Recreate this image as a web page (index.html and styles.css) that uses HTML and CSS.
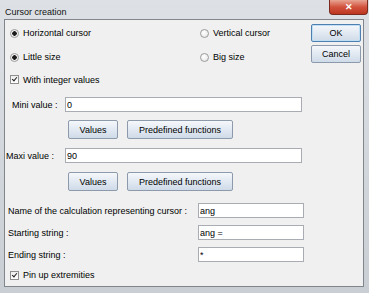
FILE: index.html
```html
<!DOCTYPE html>
<html>
<head>
    <title>Cursor creation</title>
    <link rel="stylesheet" href="styles.css">
</head>
<body>
    <div class="window">
        <div class="titlebar">
            <span class="title">Cursor creation</span>
            <span class="close">&#x2715;</span>
        </div>
        <div class="client">
            <div class="top">
                <div class="options">
                    <label class="opt"><span class="radio on"></span>Horizontal cursor</label>
                    <label class="opt"><span class="radio"></span>Vertical cursor</label>
                    <label class="opt"><span class="radio on"></span>Little size</label>
                    <label class="opt"><span class="radio"></span>Big size</label>
                </div>
                <div class="actions">
                    <button type="button" class="btn default">OK</button>
                    <button type="button" class="btn">Cancel</button>
                </div>
            </div>
            <label class="check-row"><span class="check"></span>With integer values</label>

            <div class="value-row">
                <label class="value-label mini" for="mini">Mini value :</label>
                <input type="text" class="field wide" id="mini" value="0">
            </div>
            <div class="btn-row">
                <button type="button" class="btn values">Values</button>
                <button type="button" class="btn predef">Predefined functions</button>
            </div>

            <div class="value-row second">
                <label class="value-label maxi" for="maxi">Maxi value :</label>
                <input type="text" class="field wide" id="maxi" value="90">
            </div>
            <div class="btn-row second">
                <button type="button" class="btn values">Values</button>
                <button type="button" class="btn predef">Predefined functions</button>
            </div>

            <div class="strings">
                <div class="string-row">
                    <label for="calc">Name of the calculation representing cursor :</label>
                    <input type="text" class="field short" id="calc" value="ang">
                </div>
                <div class="string-row">
                    <label for="start">Starting string :</label>
                    <input type="text" class="field short" id="start" value="ang =">
                </div>
                <div class="string-row">
                    <label for="end">Ending string :</label>
                    <input type="text" class="field short" id="end" value="*">
                </div>
            </div>
            <label class="check-row pin"><span class="check"></span>Pin up extremities</label>
        </div>
    </div>
</body>
</html>
```

FILE: styles.css
```css
body {
    margin: 0;
    font-family: "Liberation Sans", Arial, sans-serif;
    font-size: 9px;
    color: #000;
}
.window {
    width: 369px;
    height: 293px;
    box-sizing: border-box;
    padding: 0 5px 6px 4px;
    background: linear-gradient(#dde1e6, #c9ced4);
    display: flex;
    flex-direction: column;
}
.titlebar {
    height: 20px;
    display: flex;
    justify-content: space-between;
}
.title {
    padding: 7px 0 0 1px;
    color: #111;
}
.close {
    width: 39px;
    height: 15px;
    margin-right: -4px;
    box-sizing: border-box;
    border: 1px solid #7b2a1e;
    border-top: none;
    border-radius: 0 0 4px 4px;
    background: linear-gradient(#e9a594, #d2533d 50%, #bd3620);
    color: #fff;
    font-size: 9px;
    font-weight: bold;
    line-height: 14px;
    text-align: center;
}
.client {
    flex: 1;
    background: #f0f0f0;
    border: 1px solid #80868c;
}
.top {
    display: flex;
}
.options {
    flex: 1;
    display: grid;
    grid-template-columns: 190px 1fr;
    grid-auto-rows: 24px;
    padding: 1px 0 0 5px;
}
.opt, .check-row {
    display: flex;
    align-items: center;
}
.radio {
    width: 7px;
    height: 7px;
    margin-right: 4px;
    border: 1px solid #9a9a9a;
    border-radius: 50%;
    background: radial-gradient(circle at 40% 35%, #ffffff, #e3e3e3);
}
.radio.on {
    background: radial-gradient(circle, #1c1c1c 0 2px, #f4f4f4 2.5px);
}
.actions {
    display: flex;
    flex-direction: column;
    gap: 3px;
    padding-top: 4px;
    margin-right: 2px;
}
.btn {
    height: 19px;
    padding: 0;
    font-family: "Liberation Sans", Arial, sans-serif;
    font-size: 9px;
    color: #000;
    border: 1px solid #8d9aab;
    border-radius: 2px;
    background: linear-gradient(#f5f8fb, #e2e9f2 50%, #cfdbe8);
}
.actions .btn {
    width: 50px;
    height: 18px;
}
.btn.default {
    border-color: #4f7fae;
    box-shadow: inset 0 0 0 1px #bfe0f4;
}
.check-row {
    height: 21px;
    padding-left: 5px;
}
.check {
    width: 7px;
    height: 7px;
    margin-right: 4px;
    border: 1px solid #8f8f8f;
    background: linear-gradient(#eeeeee, #ffffff);
    position: relative;
}
.check::after {
    content: "";
    position: absolute;
    left: 2px;
    top: 0;
    width: 2px;
    height: 4px;
    border: solid #222;
    border-width: 0 1.5px 1.5px 0;
    transform: rotate(40deg);
}
.value-row {
    display: flex;
    align-items: center;
    margin-top: 7px;
}
.value-row.second {
    margin-top: 9px;
}
.value-label.mini {
    width: 53px;
    padding-left: 7px;
}
.value-label.maxi {
    width: 59px;
    padding-left: 1px;
}
.field {
    height: 15px;
    box-sizing: border-box;
    padding: 0 1px;
    border: 1px solid #a9adb3;
    background: #fff;
    font-family: "Liberation Sans", Arial, sans-serif;
    font-size: 9px;
    color: #000;
}
.field.wide {
    width: 237px;
}
.btn-row {
    display: flex;
    gap: 9px;
    margin: 8px 0 0 63px;
}
.btn-row.second {
    margin-top: 9px;
}
.btn.values {
    width: 50px;
}
.btn.predef {
    width: 106px;
}
.strings {
    margin-top: 12px;
    display: flex;
    flex-direction: column;
    gap: 7px;
}
.string-row {
    display: flex;
    align-items: center;
}
.string-row label {
    width: 190px;
    padding-left: 3px;
}
.field.short {
    width: 106px;
}
.check-row.pin {
    height: 22px;
    margin-top: 2px;
}
```
